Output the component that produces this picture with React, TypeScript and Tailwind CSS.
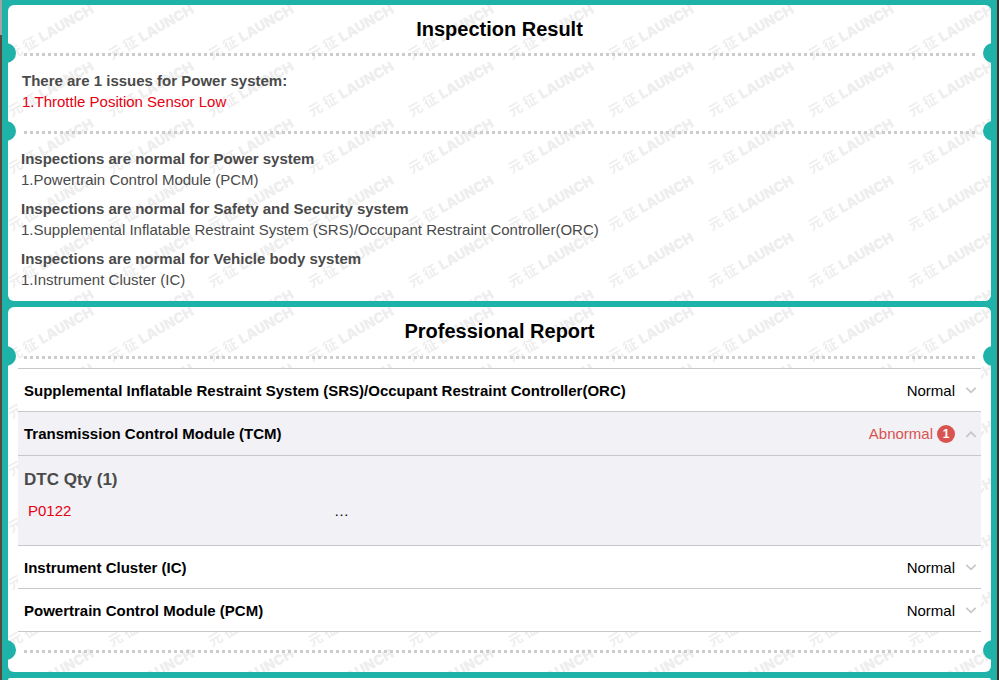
import { useState, type ReactNode } from "react";

type Module = {
  name: string;
  codes: { code: string; text: string }[];
};

const issues = ["Throttle Position Sensor Low"];

const normalSystems = [
  {
    title: "Inspections are normal for Power system",
    items: ["Powertrain Control Module (PCM)"],
  },
  {
    title: "Inspections are normal for Safety and Security system",
    items: [
      "Supplemental Inflatable Restraint System (SRS)/Occupant Restraint Controller(ORC)",
    ],
  },
  {
    title: "Inspections are normal for Vehicle body system",
    items: ["Instrument Cluster (IC)"],
  },
];

const modules: Module[] = [
  {
    name: "Supplemental Inflatable Restraint System (SRS)/Occupant Restraint Controller(ORC)",
    codes: [],
  },
  {
    name: "Transmission Control Module (TCM)",
    codes: [{ code: "P0122", text: "…" }],
  },
  { name: "Instrument Cluster (IC)", codes: [] },
  { name: "Powertrain Control Module (PCM)", codes: [] },
];

// Repeating brand watermark behind a card's content
function Watermark({ id }: { id: string }) {
  return (
    <svg aria-hidden="true" className="absolute inset-0 h-full w-full">
      <defs>
        <pattern id={id} width="100" height="57" patternUnits="userSpaceOnUse">
          <g transform="translate(4 55) rotate(-30)" fill="#eeeeee" fontSize="14">
            <text
              fontWeight="700"
              className="font-['Noto_Sans_CJK_SC',sans-serif]"
            >
              元
            </text>
            <text
              x="17"
              fontWeight="700"
              className="font-['Noto_Sans_CJK_SC',sans-serif]"
            >
              征
            </text>
            <text
              x="35"
              fontWeight="900"
              className="font-['Inter',sans-serif]"
            >
              LAUNCH
            </text>
          </g>
        </pattern>
      </defs>
      <rect width="100%" height="100%" fill={`url(#${id})`} />
    </svg>
  );
}

function Card({ id, children }: { id: string; children: ReactNode }) {
  return (
    <section className="relative overflow-hidden rounded-md bg-white">
      <Watermark id={id} />
      <div className="relative">{children}</div>
    </section>
  );
}

// Dotted tear line with a punched notch at each edge
function TearLine() {
  return (
    <div className="relative px-4">
      <span className="absolute -top-[10px] -left-3 size-5 rounded-full bg-[#1eb2a8]" />
      <div className="border-t-[3px] border-dotted border-[#cccccc]" />
      <span className="absolute -top-[10px] -right-3 size-5 rounded-full bg-[#1eb2a8]" />
    </div>
  );
}

function Chevron({ open }: { open: boolean }) {
  return (
    <svg
      aria-hidden="true"
      width="12"
      height="8"
      viewBox="0 0 12 8"
      fill="none"
      stroke="#c7c7cc"
      strokeWidth="1.8"
    >
      <path d={open ? "M1.3 6.8 6 2.3l4.7 4.5" : "M1.3 1.8 6 6.3l4.7-4.5"} />
    </svg>
  );
}

function ModuleRow({ module }: { module: Module }) {
  const count = module.codes.length;
  const [open, setOpen] = useState(count > 0);

  return (
    <li className={`border-b border-[#c8c7cc] ${open ? "bg-[#f1f1f6]" : "bg-white"}`}>
      <button
        type="button"
        aria-expanded={open}
        onClick={() => setOpen(!open)}
        className={`flex w-full items-center justify-between pr-1 pl-[6px] text-left ${open ? "min-h-[43px]" : "min-h-[42px]"}`}
      >
        <span className="font-bold">{module.name}</span>
        <span className="flex items-center">
          {count > 0 ? (
            <span className="flex items-center gap-1 text-[#d9534f]">
              Abnormal
              <span className="flex size-[18px] items-center justify-center rounded-full bg-[#d9534f] text-xs font-bold text-white">
                {count}
              </span>
            </span>
          ) : (
            <span>Normal</span>
          )}
          <span className="ml-[10px]">
            <Chevron open={open} />
          </span>
        </span>
      </button>

      {open && (
        <div className="border-t border-[#c8c7cc] px-[6px] pt-3 pb-6">
          <h3 className="text-[17px] leading-6 font-bold text-[#4a4a4a]">
            DTC Qty ({count})
          </h3>
          <dl className="mt-2">
            {module.codes.map((item) => (
              <div key={item.code} className="flex px-1">
                <dt className="w-[306px] shrink-0 text-[#e60012]">{item.code}</dt>
                <dd>{item.text}</dd>
              </div>
            ))}
          </dl>
        </div>
      )}
    </li>
  );
}

export default function App() {
  return (
    <div className="flex min-h-screen font-['Liberation_Sans',Arial,sans-serif] text-[15px] leading-[21px] text-black">
      <div className="w-[2px] bg-[linear-gradient(#a3a3a3_35px,#5a4a3e_35px)]" />

      <main className="flex grow flex-col gap-[6px] bg-[#1eb2a8] px-[6px] pt-[5px]">

        {/* Inspection Result */}

        <Card id="mark-result">
          <h2 className="text-center text-xl leading-[48px] font-bold">
            Inspection Result
          </h2>

          <TearLine />

          <div className="px-[14px] pt-[14px] pb-[19px]">
            <h3 className="font-bold text-[#4a4a4a]">
              There are {issues.length} issues for Power system:
            </h3>
            {issues.map((issue, i) => (
              <p key={issue} className="text-[#e60012]">
                {i + 1}.{issue}
              </p>
            ))}
          </div>

          <TearLine />

          <div className="flex flex-col gap-2 px-[13px] pt-[14px] pb-[11px] text-[#4a4a4a]">
            {normalSystems.map((system) => (
              <div key={system.title}>
                <h3 className="font-bold">{system.title}</h3>
                {system.items.map((item, i) => (
                  <p key={item}>
                    {i + 1}.{item}
                  </p>
                ))}
              </div>
            ))}
          </div>
        </Card>

        {/* Professional Report */}

        <Card id="mark-report">
          <h2 className="text-center text-xl leading-[49px] font-bold">
            Professional Report
          </h2>

          <TearLine />

          <ul className="mx-[10px] mt-[9px] mb-[18px] border-t border-[#c8c7cc]">
            {modules.map((module) => (
              <ModuleRow key={module.name} module={module} />
            ))}
          </ul>

          <TearLine />
          <div className="h-[19px]" />
        </Card>

        {/* Next card */}

        <div className="grow rounded-t-sm bg-white" />
      </main>

      <div className="w-[2px] bg-[#3a3029]" />
    </div>
  );
}
